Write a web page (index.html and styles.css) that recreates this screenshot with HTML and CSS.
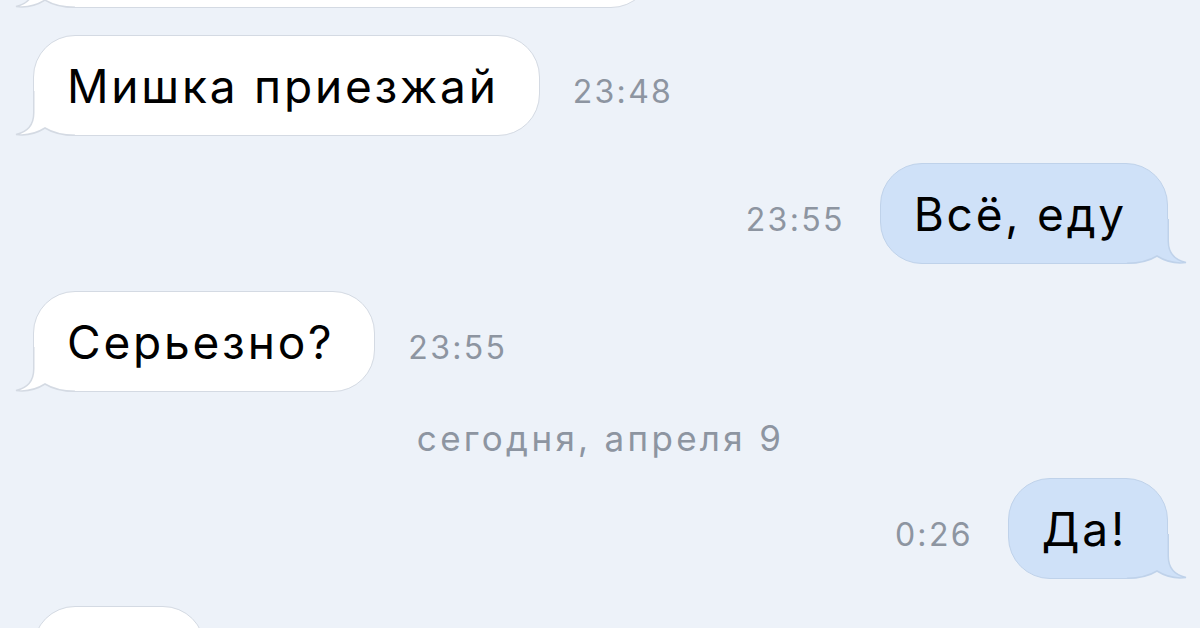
FILE: index.html
```html
<!DOCTYPE html>
<html lang="ru">
<head>
<meta charset="utf-8">
<title>Чат</title>
<link rel="stylesheet" href="styles.css">
</head>
<body>
<div class="chat">
  <div class="row in">
    <div class="bubble w-top">
      <svg class="tail" viewBox="0 0 60 50" width="60" height="50"><path class="tf" d="M18.75 4 L18.75 26 C18.75 38 12 45 1 47.5 C12 49 22 46 30 41 C38 46 48 48.25 60 48.25 L60 4 Z"/><path class="ts" d="M18.75 4 L18.75 26 C18.75 38 12 45 1 47.5 C12 49 22 46 30 41 C38 46 48 48.25 60 48.25"/></svg>
    </div>
  </div>
  <div class="row in">
    <div class="bubble"><span class="txt">Мишка приезжай</span>
      <svg class="tail" viewBox="0 0 60 50" width="60" height="50"><path class="tf" d="M18.75 4 L18.75 26 C18.75 38 12 45 1 47.5 C12 49 22 46 30 41 C38 46 48 48.25 60 48.25 L60 4 Z"/><path class="ts" d="M18.75 4 L18.75 26 C18.75 38 12 45 1 47.5 C12 49 22 46 30 41 C38 46 48 48.25 60 48.25"/></svg>
    </div>
    <span class="time">23:48</span>
  </div>
  <div class="row out">
    <span class="time">23:55</span>
    <div class="bubble"><span class="txt">Всё, еду</span>
      <svg class="tail" viewBox="0 0 60 50" width="60" height="50"><path class="tf" d="M18.75 4 L18.75 26 C18.75 38 12 45 1 47.5 C12 49 22 46 30 41 C38 46 48 48.25 60 48.25 L60 4 Z"/><path class="ts" d="M18.75 4 L18.75 26 C18.75 38 12 45 1 47.5 C12 49 22 46 30 41 C38 46 48 48.25 60 48.25"/></svg>
    </div>
  </div>
  <div class="row in">
    <div class="bubble"><span class="txt">Серьезно?</span>
      <svg class="tail" viewBox="0 0 60 50" width="60" height="50"><path class="tf" d="M18.75 4 L18.75 26 C18.75 38 12 45 1 47.5 C12 49 22 46 30 41 C38 46 48 48.25 60 48.25 L60 4 Z"/><path class="ts" d="M18.75 4 L18.75 26 C18.75 38 12 45 1 47.5 C12 49 22 46 30 41 C38 46 48 48.25 60 48.25"/></svg>
    </div>
    <span class="time">23:55</span>
  </div>
  <div class="date">сегодня, апреля 9</div>
  <div class="row out">
    <span class="time">0:26</span>
    <div class="bubble"><span class="txt">Да!</span>
      <svg class="tail" viewBox="0 0 60 50" width="60" height="50"><path class="tf" d="M18.75 4 L18.75 26 C18.75 38 12 45 1 47.5 C12 49 22 46 30 41 C38 46 48 48.25 60 48.25 L60 4 Z"/><path class="ts" d="M18.75 4 L18.75 26 C18.75 38 12 45 1 47.5 C12 49 22 46 30 41 C38 46 48 48.25 60 48.25"/></svg>
    </div>
  </div>
  <div class="row in">
    <div class="bubble w-bottom">
      <svg class="tail" viewBox="0 0 60 50" width="60" height="50"><path class="tf" d="M18.75 4 L18.75 26 C18.75 38 12 45 1 47.5 C12 49 22 46 30 41 C38 46 48 48.25 60 48.25 L60 4 Z"/><path class="ts" d="M18.75 4 L18.75 26 C18.75 38 12 45 1 47.5 C12 49 22 46 30 41 C38 46 48 48.25 60 48.25"/></svg>
    </div>
  </div>
</div>
</body>
</html>
```
FILE: styles.css
```css
html, body {
  margin: 0;
  padding: 0;
  background: #edf2f9;
  overflow: hidden;
}
body {
  width: 1200px;
  height: 628px;
  font-family: "Inter", "Liberation Sans", sans-serif;
  color: #000;
}
.chat {
  display: flex;
  flex-direction: column;
  gap: 27px;
  margin-top: -93px;
  padding: 0 32px 0 33px;
}
.row {
  display: flex;
  align-items: baseline;
  gap: 33px;
}
.row.out {
  justify-content: flex-end;
}
.row.out .time {
  margin-right: 2px;
}
.bubble {
  position: relative;
  box-sizing: border-box;
  height: 101px;
  display: flex;
  align-items: center;
  padding: 0 40px 0 33px;
  border-radius: 42px;
  font-size: 46px;
  letter-spacing: 2.8px;
  line-height: 1;
}
.txt {
  position: relative;
  z-index: 1;
}
.in .bubble {
  background: #ffffff;
  border: 1.5px solid #d4dae3;
}
.out .bubble {
  background: #cfe1f8;
  border: 1.5px solid #bfd2ea;
}
.w-top {
  width: 620px;
}
.w-bottom {
  width: 172px;
}
.tail {
  position: absolute;
  bottom: -1.5px;
  left: -19.5px;
  z-index: 0;
  overflow: visible;
}
.out .tail {
  left: auto;
  right: -19.5px;
  transform: scaleX(-1);
}
.tf { stroke: none; }
.ts { fill: none; stroke-width: 1.5; }
.in .tf { fill: #ffffff; }
.in .ts { stroke: #d4dae3; }
.out .tf { fill: #cfe1f8; }
.out .ts { stroke: #bfd2ea; }
.time {
  font-size: 32px;
  letter-spacing: 2.3px;
  color: #8d95a1;
}
.date {
  height: 32px;
  line-height: 38px;
  text-align: center;
  font-size: 35px;
  letter-spacing: 3.3px;
  color: #8d95a1;
}
```
